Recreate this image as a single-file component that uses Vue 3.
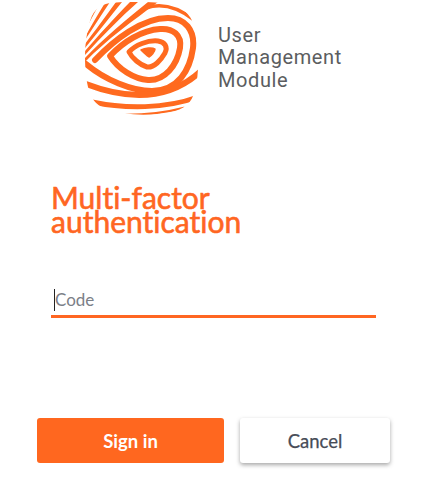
<template>
  <div class="page">
    <header class="brand">
      <svg class="brand__logo" width="125" height="125" viewBox="0 0 125 125" fill="none">
        <defs>
          <clipPath id="logoShape">
            <path d="M30 3 C50 1 75 1 92 5 C108 9 114 20 116 35 C119 55 119 75 115 90 C112 103 104 110 90 112 C70 116 45 116 25 108 C12 104 8 92 6 75 C4 55 5 40 9 25 C12 12 18 5 30 3 Z" />
          </clipPath>
        </defs>
        <g clip-path="url(#logoShape)" stroke="#ff6a1f" stroke-linecap="round" stroke-linejoin="round">
          <path d="M61 50 C65 48 72 47 75 49 C75 52 71 56 69 57 C66 55 63 52 61 50 Z" fill="#ff6a1f" stroke-width="1.5" />
          <path d="M49 52 C55 45 68 40 78 41 C85 42 88 47 85 53 C81 60 74 68 67 67 C60 65 52 58 49 52 Z" stroke-width="5" />
          <path d="M30 56 C43 42 62 30 80 29 C93 28 102 35 100 48 C97 65 85 81 68 80 C54 79 38 69 30 56 Z" stroke-width="6" />
          <path d="M15 60 C34 40 62 18 88 18 C105 18 115 30 113 48 C110 70 98 91 72 91 C52 91 25 80 6 64" stroke-width="6" />
          <path d="M6 84 C40 97 85 105 122 70" stroke-width="6" />
          <path d="M12 102 C45 109 85 109 118 97" stroke-width="5" />
          <path d="M46 115 C65 115 85 113 104 108" stroke-width="2.5" />
          <path d="M66 8 C78 4 95 5 114 20" stroke-width="3.5" />
          <g fill="#ff6a1f" stroke="none">
            <path d="M5 58 C24 38 48 18 68 2 L78 2 C54 20 26 40 5 62 Z" />
            <path d="M5 51 C18 36 36 16 50 2 L58 2 C40 18 22 36 5 55 Z" />
            <path d="M5 44 C14 32 26 16 36 2 L42 2 C30 17 18 32 5 48 Z" />
            <path d="M5 37 C10 28 18 14 25 3 L30 2 C22 14 13 28 5 40 Z" />
            <path d="M5 29 C8 22 12 14 15 8 L19 5 C14 14 9 22 5 32 Z" />
          </g>
        </g>
      </svg>
      <div class="brand__name">User<br />Management<br />Module</div>
    </header>

    <h1 class="title">Multi-factor<br />authentication</h1>

    <div class="field">
      <span class="field__caret"></span>
      <input class="field__input" type="text" placeholder="Code" />
    </div>

    <div class="actions">
      <button class="btn btn--primary">Sign in</button>
      <button class="btn btn--secondary">Cancel</button>
    </div>
  </div>
</template>

<script setup>
</script>

<style>
html, body {
  margin: 0;
  background: #fff;
}
</style>

<style scoped>
.page {
  width: 432px;
  height: 486px;
  overflow: hidden;
  background: #fff;
  font-family: Lato, "Open Sans", sans-serif;
}

.brand {
  display: flex;
  align-items: center;
  gap: 13px;
  padding-left: 80px;
}

.brand__logo {
  flex: none;
}

.brand__name {
  font-family: Roboto, sans-serif;
  font-size: 20px;
  letter-spacing: 0.6px;
  line-height: 22.5px;
  color: #5b5d60;
  padding-bottom: 10px;
}

.title {
  margin: 60px 0 0 51px;
  font-size: 30px;
  line-height: 24px;
  font-weight: 400;
  font-variant-ligatures: none;
  -webkit-text-stroke: 0.6px #ff6622;
  color: #ff6622;
}

.field {
  position: relative;
  margin: 51px 0 0 51px;
  width: 325px;
  border-bottom: 3px solid #ff6622;
}

.field__input {
  display: block;
  width: 100%;
  box-sizing: border-box;
  height: 31px;
  padding: 0 0 0 4px;
  border: none;
  outline: none;
  background: transparent;
  font-family: Lato, sans-serif;
  font-size: 17px;
  color: #333;
}

.field__input::placeholder {
  color: #7b8087;
  opacity: 1;
}

.field__caret {
  position: absolute;
  left: 3px;
  top: 5px;
  width: 1px;
  height: 22px;
  background: #222;
}

.actions {
  display: flex;
  gap: 16px;
  margin: 100px 0 0 37px;
}

.btn {
  height: 45px;
  border: none;
  border-radius: 3px;
  font-family: Lato, sans-serif;
  font-size: 18.5px;
}

.btn--primary {
  width: 187px;
  background: #ff671f;
  color: #fff;
  font-weight: 700;
}

.btn--secondary {
  width: 150px;
  background: #fff;
  color: #474c57;
  font-weight: 400;
  -webkit-text-stroke: 0.25px #474c57;
  box-shadow: 0 2px 4px rgba(0, 0, 0, 0.35);
}
</style>
